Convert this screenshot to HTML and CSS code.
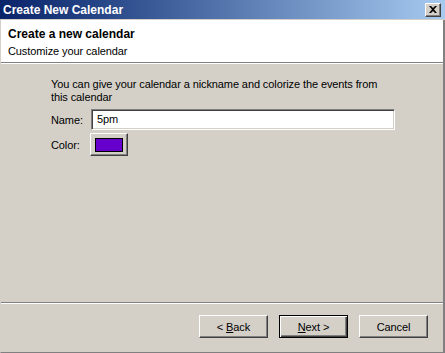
FILE: index.html
```html
<!DOCTYPE html>
<html>
<head>
<meta charset="utf-8">
<link rel="stylesheet" href="styles.css">
</head>
<body>
<div class="window">
  <div class="titlebar">
    <span class="title">Create New Calendar</span>
    <span class="close"><svg width="8" height="7" viewBox="0 0 8 7"><path d="M0 0h2l2 2 2-2h2L5 3.5 8 7H6L4 5 2 7H0l3-3.5z" fill="#000"/></svg></span>
  </div>
  <div class="header">
    <div class="h-title">Create a new calendar</div>
    <div class="h-sub">Customize your calendar</div>
  </div>
  <div class="sep"></div>
  <div class="body">
    <div class="content">
      <p class="desc">You can give your calendar a nickname and colorize the events from this calendar</p>
      <div class="row name-row">
        <label class="lbl">Name:</label>
        <div class="input">5pm</div>
      </div>
      <div class="row color-row">
        <label class="lbl">Color:</label>
        <div class="colorbtn"><span class="swatch"></span></div>
      </div>
    </div>
  </div>
  <div class="sep"></div>
  <div class="buttons">
    <div class="btn"><span>&lt; <u>B</u>ack</span></div>
    <div class="btn default"><span><u>N</u>ext &gt;</span></div>
    <div class="btn"><span>Cancel</span></div>
  </div>
</div>
</body>
</html>
```
FILE: styles.css
```css
html, body {
  margin: 0;
  padding: 0;
  background: #d4d0c8;
}
body {
  width: 445px;
  height: 353px;
  overflow: hidden;
  font-family: "Liberation Sans", Arial, sans-serif;
  font-size: 11px;
  letter-spacing: -0.1px;
  color: #000;
}
.window {
  width: 445px;
  height: 353px;
  box-sizing: border-box;
  display: flex;
  flex-direction: column;
  border-left: 1px solid #d4d0c8;
  border-right: 2px solid #808080;
  border-bottom: 1px solid #808080;
  background: #d4d0c8;
}
.titlebar {
  height: 19px;
  margin-left: -1px;
  margin-right: -2px;
  padding-left: 3px;
  padding-right: 4px;
  border-bottom: 1px solid #d4d0c8;
  display: flex;
  align-items: center;
  justify-content: space-between;
  background: linear-gradient(to right, #0a246a 0%, #2a4a8a 25%, #a6caf0 100%);
}
.title {
  color: #fff;
  font-weight: bold;
  font-size: 12px;
  letter-spacing: 0;
}
.close {
  width: 16px;
  height: 14px;
  box-sizing: border-box;
  background: #d4d0c8;
  border-top: 1px solid #fff;
  border-left: 1px solid #fff;
  border-right: 1px solid #404040;
  border-bottom: 1px solid #404040;
  box-shadow: inset -1px -1px 0 #808080;
  display: flex;
  align-items: center;
  justify-content: center;
}
.header {
  height: 42px;
  box-sizing: border-box;
  background: #fff;
  padding: 7px 0 0 7px;
}
.h-title {
  font-weight: bold;
  font-size: 12px;
  letter-spacing: 0;
  line-height: 15px;
}
.h-sub {
  line-height: 14px;
  margin-top: 2px;
}
.sep {
  height: 1px;
  background: #808080;
  border-bottom: 1px solid #fff;
}
.body {
  flex: 1;
  padding: 14px 0 0 50px;
}
.content {
  width: 345px;
}
.desc {
  margin: 0 0 5px 0;
  line-height: 13px;
}
.row {
  display: flex;
  align-items: center;
}
.lbl {
  width: 40px;
}
.name-row {
  height: 21px;
}
.input {
  width: 304px;
  height: 21px;
  box-sizing: border-box;
  background: #fff;
  border-top: 1px solid #808080;
  border-left: 1px solid #808080;
  border-right: 1px solid #fff;
  border-bottom: 1px solid #fff;
  box-shadow: inset 1px 1px 0 #404040, inset -1px -1px 0 #d4d0c8;
  padding: 0 5px;
  line-height: 19px;
}
.color-row {
  margin-top: 3px;
  height: 23px;
}
.colorbtn {
  width: 38px;
  height: 23px;
  box-sizing: border-box;
  margin-left: -1px;
  border-top: 1px solid #fff;
  border-left: 1px solid #fff;
  border-right: 1px solid #404040;
  border-bottom: 1px solid #404040;
  box-shadow: inset -1px -1px 0 #808080, inset 1px 1px 0 #d4d0c8;
  display: flex;
  align-items: center;
  justify-content: center;
}
.swatch {
  width: 28px;
  height: 14px;
  box-sizing: border-box;
  background: #6600cc;
  border: 1px solid #000;
}
.buttons {
  height: 48px;
  box-sizing: border-box;
  padding: 11px 15px 0 0;
  display: flex;
  justify-content: flex-end;
  align-items: flex-start;
  gap: 11px;
}
.btn {
  width: 69px;
  height: 23px;
  box-sizing: border-box;
  border-top: 1px solid #fff;
  border-left: 1px solid #fff;
  border-right: 1px solid #404040;
  border-bottom: 1px solid #404040;
  box-shadow: inset -1px -1px 0 #808080;
  display: flex;
  align-items: center;
  justify-content: center;
}
.btn.default {
  border: 1px solid #000;
  box-shadow: inset 1px 1px 0 #fff, inset -1px -1px 0 #404040, inset -2px -2px 0 #808080;
}
```
